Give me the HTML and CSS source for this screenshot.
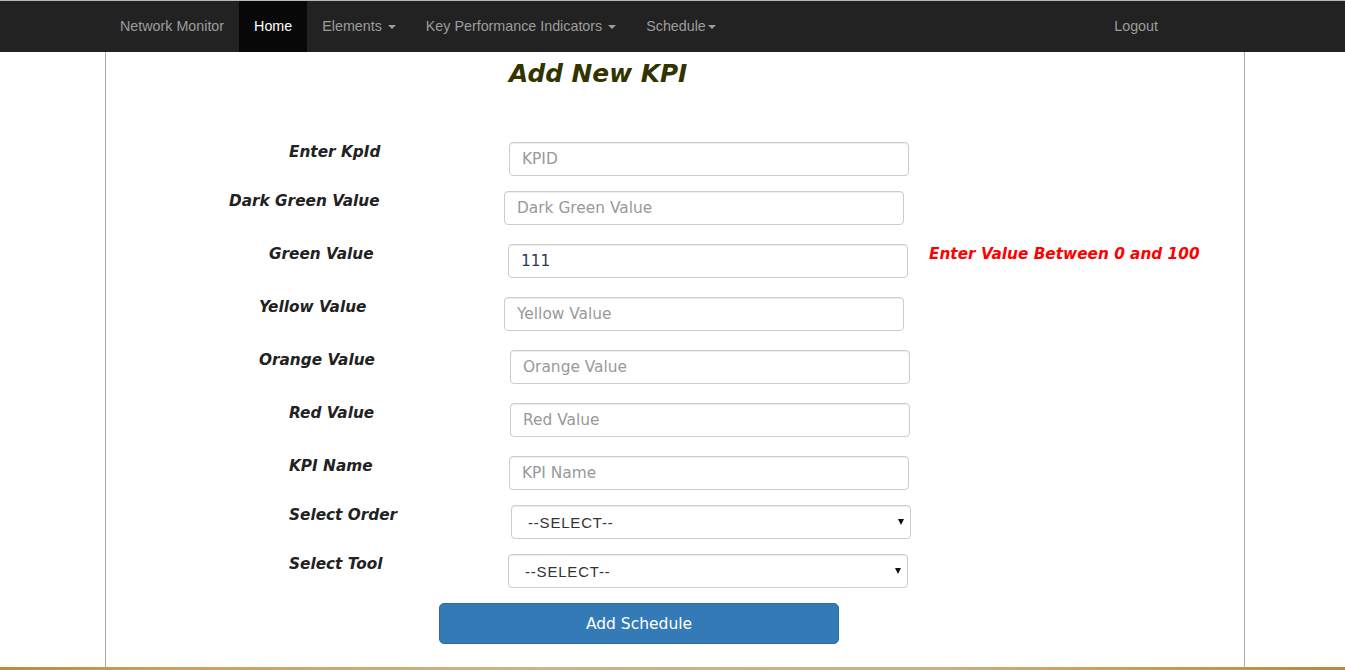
FILE: index.html
```html
<!DOCTYPE html>
<html lang="en">
<head>
<meta charset="utf-8">
<title>Add New KPI</title>
<link rel="stylesheet" href="styles.css">
</head>
<body>
<header class="topbar">
  <nav class="nav-inner">
    <a class="brand" href="#">Network Monitor</a>
    <ul class="nav">
      <li class="active"><a href="#">Home</a></li>
      <li><a href="#">Elements <span class="caret"></span></a></li>
      <li><a href="#">Key Performance Indicators <span class="caret"></span></a></li>
      <li><a href="#">Schedule<span class="caret"></span></a></li>
    </ul>
    <ul class="nav nav-right">
      <li><a href="#">Logout</a></li>
    </ul>
  </nav>
</header>

<main class="container">
  <h2 class="title">Add New KPI</h2>
  <form class="kpi-form">
    <div class="field gap-sm">
      <label class="lbl lbl-183">Enter KpId</label>
      <input class="control off-5" type="text" placeholder="KPID">
    </div>
    <div class="field gap-lg">
      <label class="lbl lbl-123">Dark Green Value</label>
      <input class="control off-0" type="text" placeholder="Dark Green Value">
    </div>
    <div class="field gap-lg">
      <label class="lbl lbl-163">Green Value</label>
      <input class="control off-4" type="text" value="111" placeholder="Green Value">
      <span class="error">Enter Value Between 0 and 100</span>
    </div>
    <div class="field gap-lg">
      <label class="lbl lbl-153">Yellow Value</label>
      <input class="control off-0" type="text" placeholder="Yellow Value">
    </div>
    <div class="field gap-lg">
      <label class="lbl lbl-153">Orange Value</label>
      <input class="control off-6" type="text" placeholder="Orange Value">
    </div>
    <div class="field gap-lg">
      <label class="lbl lbl-183">Red Value</label>
      <input class="control off-6" type="text" placeholder="Red Value">
    </div>
    <div class="field gap-sm">
      <label class="lbl lbl-183">KPI Name</label>
      <input class="control off-5" type="text" placeholder="KPI Name">
    </div>
    <div class="field gap-sm">
      <label class="lbl lbl-183">Select Order</label>
      <div class="select-wrap off-7">
        <select class="control select"><option>--SELECT--</option></select>
      </div>
    </div>
    <div class="field gap-sm">
      <label class="lbl lbl-183">Select Tool</label>
      <div class="select-wrap off-4">
        <select class="control select"><option>--SELECT--</option></select>
      </div>
    </div>
    <div class="actions">
      <button class="btn-primary" type="button">Add Schedule</button>
    </div>
  </form>
</main>

<div class="taskbar"></div>
</body>
</html>
```

FILE: styles.css
```css
* { box-sizing: border-box; }

html, body {
  margin: 0;
  padding: 0;
  background: #fff;
  font-family: "DejaVu Sans", Verdana, sans-serif;
  color: #333;
}

/* ---------- navbar ---------- */
.topbar {
  background: #222;
  border-top: 1px solid #b8b8b8;
  height: 52px;
}

.nav-inner {
  width: 1140px;
  margin-left: 105px;
  display: flex;
  align-items: stretch;
  height: 51px;
  font-family: "Liberation Sans", Arial, sans-serif;
  font-size: 14.3px;
}

.nav-inner a {
  text-decoration: none;
  color: #9d9d9d;
}

.brand {
  display: block;
  padding: 0 15px;
  line-height: 51px;
}

.nav {
  list-style: none;
  margin: 0;
  padding: 0;
  display: flex;
}

.nav li a {
  display: block;
  padding: 0 15px;
  line-height: 51px;
}

.nav li.active a {
  background: #080808;
  color: #fff;
}

.nav-right {
  margin-left: auto;
  margin-right: 72px;
}

.caret {
  display: inline-block;
  width: 0;
  height: 0;
  margin-left: 2px;
  vertical-align: middle;
  border-top: 4px solid #9d9d9d;
  border-left: 4px solid transparent;
  border-right: 4px solid transparent;
}

/* ---------- page container ---------- */
.container {
  width: 1140px;
  margin-left: 105px;
  min-height: calc(100vh - 52px);
  border-left: 1px solid #aaa;
  border-right: 1px solid #aaa;
  padding-top: 9px;
  padding-bottom: 20px;
}

.title {
  margin: 0;
  padding-left: 403px;
  font-size: 24.8px;
  line-height: 26px;
  font-weight: bold;
  font-style: italic;
  color: #333300;
}

.kpi-form {
  padding-top: 55px;
}

.field {
  display: flex;
  align-items: flex-start;
}

.gap-sm { margin-bottom: 15px; }
.gap-lg { margin-bottom: 19px; }

.lbl {
  width: 398px;
  flex: none;
  font-size: 15.3px;
  line-height: 20px;
  font-weight: bold;
  font-style: italic;
  color: #222;
}

.lbl-123 { padding-left: 123px; }
.lbl-153 { padding-left: 153px; }
.lbl-163 { padding-left: 163px; }
.lbl-183 { padding-left: 183px; }

.off-0 { margin-left: 0; }
.off-4 { margin-left: 4px; }
.off-5 { margin-left: 5px; }
.off-6 { margin-left: 6px; }
.off-7 { margin-left: 7px; }

.control {
  width: 400px;
  height: 34px;
  padding: 6px 12px;
  border: 1px solid #ccc;
  border-radius: 4px;
  background: #fff;
  font-family: "DejaVu Sans", Verdana, sans-serif;
  font-size: 15.4px;
  color: #2b3a5c;
  box-shadow: inset 0 1px 1px rgba(0,0,0,.075);
  outline: none;
}

.control::placeholder {
  color: #999;
}

.select-wrap {
  position: relative;
  width: 400px;
}

.select {
  -webkit-appearance: none;
  appearance: none;
  padding-left: 16px;
  font-family: "Liberation Sans", Arial, sans-serif;
  font-size: 15px;
  letter-spacing: 0.8px;
  color: #333;
}

.select-wrap::after {
  content: "";
  position: absolute;
  right: 7px;
  top: 14px;
  width: 0;
  height: 0;
  border-top: 6px solid #111;
  border-left: 3px solid transparent;
  border-right: 3px solid transparent;
  pointer-events: none;
}

.error {
  margin-left: 21px;
  font-size: 15.3px;
  line-height: 20px;
  font-weight: bold;
  font-style: italic;
  color: #ff0000;
}

.actions {
  padding-left: 333px;
}

.btn-primary {
  width: 400px;
  height: 41px;
  border: 1px solid #2e6da4;
  border-radius: 5px;
  background: #337ab7;
  color: #fff;
  font-family: "DejaVu Sans", Verdana, sans-serif;
  font-size: 15.5px;
  cursor: pointer;
}

/* ---------- bottom strip (desktop taskbar peeking in) ---------- */
.taskbar {
  position: fixed;
  left: 0;
  right: 0;
  bottom: 0;
  height: 3px;
  background: linear-gradient(90deg, #c08a34 0%, #c9a15a 12%, #cdb584 40%, #c9b07f 70%, #c99a44 88%, #b98a3e 100%);
}
```
